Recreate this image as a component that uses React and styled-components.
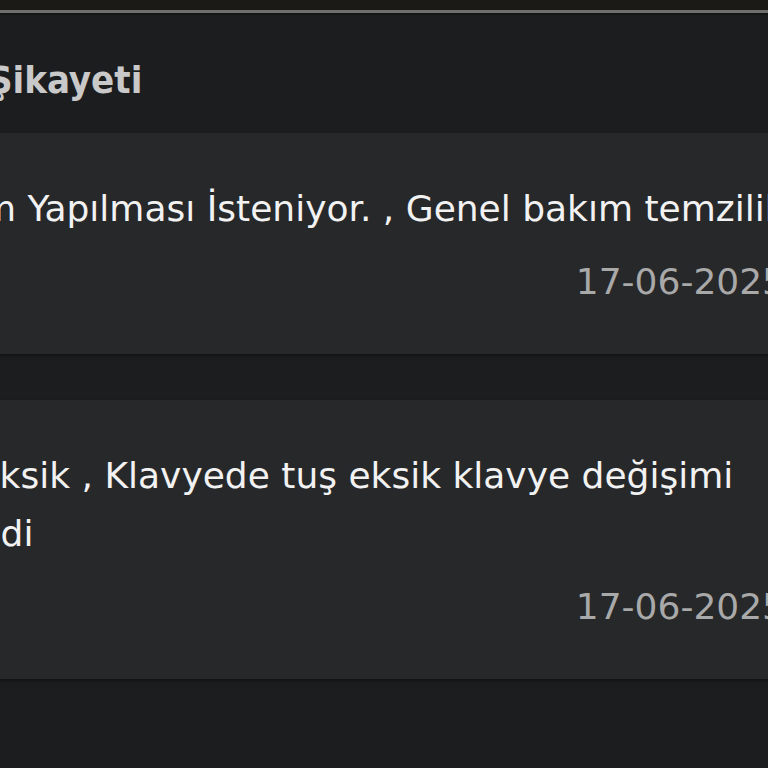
import { createGlobalStyle, styled } from "styled-components";

const GlobalStyle = createGlobalStyle`
  html, body {
    margin: 0;
    padding: 0;
    background: #1c1d1f;
  }
  body {
    font-family: "DejaVu Sans", "Noto Sans", sans-serif;
  }
`;

const Screen = styled.div`
  width: 768px;
  height: 768px;
  overflow: hidden;
  background: #1c1d1f;
`;

const StatusBar = styled.div`
  height: 10px;
  background: #1c1a17;
  border-bottom: 3px solid #6f6f6f;
  box-shadow: 0 2px 0 #151515;
`;

// ekranin kaydirilmis hali: sol ve sag kenarlar disarida kaliyor
const Content = styled.div`
  margin-left: -200px;
  width: 1068px;
  display: flex;
  flex-direction: column;
`;

const Title = styled.h2`
  margin: 45px 0 31px;
  padding-left: 78px;
  font-family: "DejaVu Sans Condensed", "DejaVu Sans", sans-serif;
  font-weight: 700;
  font-size: 38px;
  line-height: 44px;
  color: #c9c9c9;
  white-space: nowrap;
`;

const List = styled.div`
  display: flex;
  flex-direction: column;
  gap: 46px;
`;

const Card = styled.div`
  background: #27282a;
  padding: 47px 68px 43px 45px;
  box-shadow: 0 2px 3px rgba(0, 0, 0, 0.35);
  display: flex;
  flex-direction: column;
  gap: 15px;
`;

const Text = styled.p`
  margin: 0;
  font-size: 36px;
  line-height: 58px;
  color: #f2f2f2;
`;

const DateText = styled.span`
  align-self: flex-end;
  margin-right: 15px;
  font-size: 36px;
  line-height: 58px;
  color: #a9a9a9;
`;

const complaints = [
  {
    id: 1,
    text: "PC Bakım Yapılması İsteniyor. , Genel bakım temzilik",
    date: "17-06-2025",
  },
  {
    id: 2,
    text: "Klavye Eksik , Klavyede tuş eksik klavye değişimi değiştirildi",
    date: "17-06-2025",
  },
];

const App = () => {
  return (
    <Screen>
      <GlobalStyle />
      <StatusBar />
      <Content>
        <Title>Arıza Şikayeti</Title>
        <List>
          {complaints.map((c) => (
            <Card key={c.id}>
              <Text>{c.text}</Text>
              <DateText>{c.date}</DateText>
            </Card>
          ))}
        </List>
      </Content>
    </Screen>
  );
};

export default App;
